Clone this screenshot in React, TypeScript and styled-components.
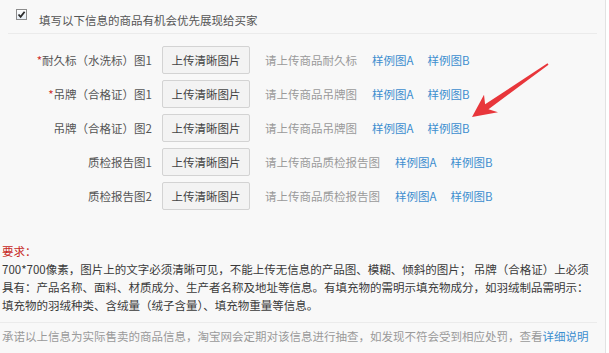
import styled, { createGlobalStyle } from 'styled-components'

const GlobalStyle = createGlobalStyle`
  html, body {
    margin: 0;
    padding: 0;
    background: #fff;
  }

  body {
    font-family: "Noto Sans CJK SC", "Liberation Sans", sans-serif;
    font-size: 11.5px;
    color: #555;
  }
`

const Panel = styled.div`
  background: #f8f8f8;
  border-right: 1px solid #e2e2e2;
  box-sizing: border-box;
  height: 353px;
  position: relative;
  width: 606px;
`

const Header = styled.label`
  align-items: flex-start;
  border-bottom: 1px solid #ebebeb;
  box-sizing: border-box;
  display: flex;
  gap: 12px;
  height: 34px;
  margin: 0 8px;
  padding: 8px 0 0 8px;
`

const CheckBox = styled.span`
  align-items: center;
  background: linear-gradient(#fdfdfd, #e6eef6);
  border: 1px solid #8c8c8c;
  box-sizing: border-box;
  display: flex;
  height: 11px;
  justify-content: center;
  margin-top: 1px;
  width: 11px;
`

const HeaderText = styled.span`
  color: #555;
  line-height: 25px;
`

const Rows = styled.div`
  display: grid;
  gap: 6px;
  padding-top: 12px;
`

const Row = styled.div`
  align-items: center;
  display: flex;
  height: 28px;
`

const Label = styled.span`
  color: #555;
  margin-right: 10px;
  text-align: right;
  white-space: nowrap;
  width: 152px;
`

const Star = styled.span`
  color: #d0302b;
`

const UploadButton = styled.button`
  background: #f3f3f3;
  border: 1px solid #d3d3d3;
  border-radius: 2px;
  color: #444;
  font: inherit;
  height: 28px;
  margin-right: 15px;
  padding: 0;
  width: 88px;
`

const Hint = styled.span`
  color: #9a9a9a;
  margin-right: 15px;
  white-space: nowrap;
`

const SampleLink = styled.a`
  color: #3d8ecf;
  margin-right: 14px;
  text-decoration: none;
  white-space: nowrap;
`

const Requirements = styled.div`
  border-bottom: 1px solid #ebebeb;
  line-height: 18px;
  margin: 32px 8px 0 0;
  padding: 0 0 8px 2px;
`

const ReqTitle = styled.div`
  color: #c7281f;
`

const ReqLine = styled.div`
  color: #3a3a3a;
  white-space: nowrap;
`

const Promise = styled.div`
  color: #9a9a9a;
  line-height: 18px;
  padding: 4px 0 0 2px;
  white-space: nowrap;
`

const Overlay = styled.svg`
  left: 0;
  pointer-events: none;
  position: absolute;
  top: 0;
`

interface UploadRowProps {
  label: string
  required?: boolean
  hint: string
}

const UploadRow: React.FC<UploadRowProps> = ({ label, required, hint }) => (
  <Row>
    <Label>
      {required && <Star>*</Star>}
      {label}
    </Label>
    <UploadButton type="button">上传清晰图片</UploadButton>
    <Hint>{hint}</Hint>
    <SampleLink href="#">样例图A</SampleLink>
    <SampleLink href="#">样例图B</SampleLink>
  </Row>
)

const rows: UploadRowProps[] = [
  { label: '耐久标（水洗标）图1', required: true, hint: '请上传商品耐久标' },
  { label: '吊牌（合格证）图1', required: true, hint: '请上传商品吊牌图' },
  { label: '吊牌（合格证）图2', hint: '请上传商品吊牌图' },
  { label: '质检报告图1', hint: '请上传商品质检报告图' },
  { label: '质检报告图2', hint: '请上传商品质检报告图' },
]

const App = () => (
  <>
    <GlobalStyle />
    <Panel>
      <Header>
        <CheckBox>
          <svg width="9" height="9" viewBox="0 0 9 9">
            <path d="M1.5 4.5 L3.6 6.8 L7.6 1.8" fill="none" stroke="#2b2b2b" strokeWidth="1.8" />
          </svg>
        </CheckBox>
        <HeaderText>填写以下信息的商品有机会优先展现给买家</HeaderText>
      </Header>

      <Rows>
        {rows.map(r => <UploadRow key={r.label} {...r} />)}
      </Rows>

      <Requirements>
        <ReqTitle>要求：</ReqTitle>
        <ReqLine>700*700像素，图片上的文字必须清晰可见，不能上传无信息的产品图、模糊、倾斜的图片； 吊牌（合格证）上必须</ReqLine>
        <ReqLine>具有：产品名称、面料、材质成分、生产者名称及地址等信息。有填充物的需明示填充物成分，如羽绒制品需明示：</ReqLine>
        <ReqLine>填充物的羽绒种类、含绒量（绒子含量）、填充物重量等信息。</ReqLine>
      </Requirements>

      <Promise>
        承诺以上信息为实际售卖的商品信息，淘宝网会定期对该信息进行抽查，如发现不符会受到相应处罚，查看<SampleLink href="#">详细说明</SampleLink>
      </Promise>

      {/* the red annotation arrow */}
      <Overlay width="606" height="353">
        <polygon
          points="472,117 498,112.3 488.5,109.2 548.5,64.7 547.5,63.3 485.1,104.2 484,94.8"
          fill="#e8363b"
        />
      </Overlay>
    </Panel>
  </>
)

export default App
